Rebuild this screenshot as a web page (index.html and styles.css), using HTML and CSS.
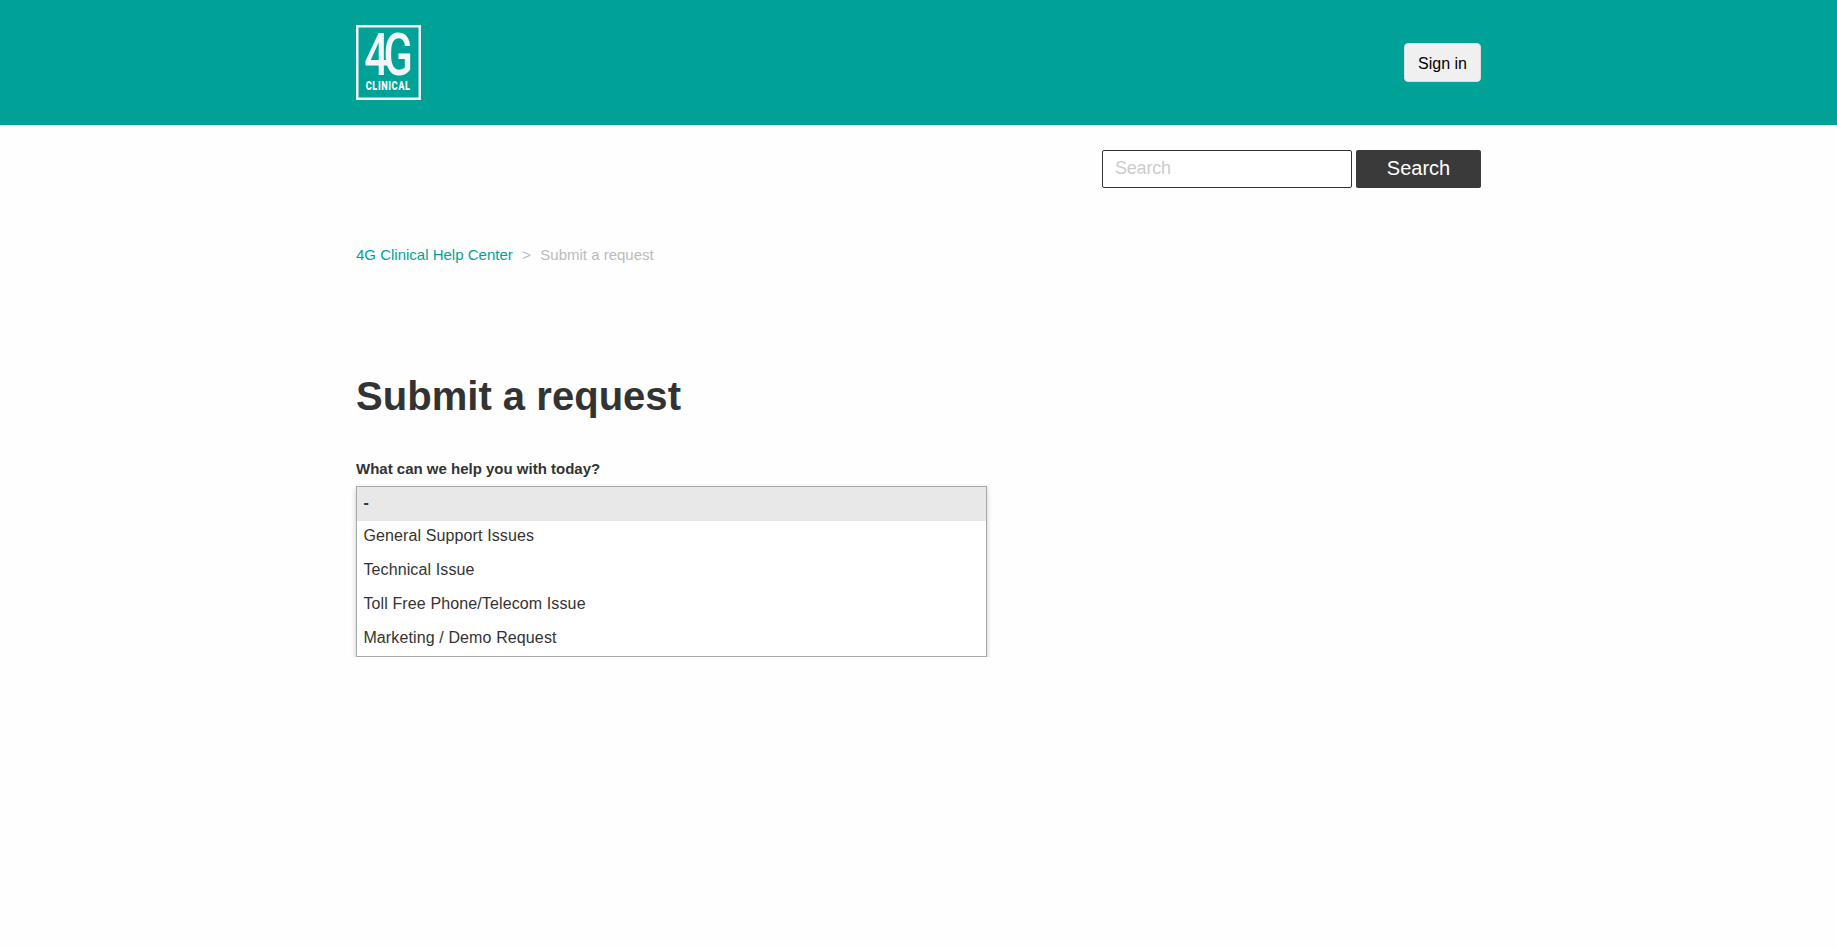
FILE: index.html
```html
<!DOCTYPE html>
<html lang="en">
<head>
<meta charset="utf-8">
<title>Submit a request – 4G Clinical Help Center</title>
<link rel="stylesheet" href="styles.css">
</head>
<body>
<header class="header">
  <div class="wrap header-inner">
    <a class="logo" aria-label="4G Clinical">
      <svg width="65" height="75" viewBox="0 0 65 75">
        <rect class="logo-frame" x="1.25" y="1.25" width="62.5" height="72.5"/>
        <text class="logo-mark" transform="translate(8.2 50.2) scale(.73 1)">4G</text>
        <text class="logo-word" transform="translate(9.7 64.5) scale(.74 1)" textLength="60" lengthAdjust="spacing">CLINICAL</text>
      </svg>
    </a>
    <button class="sign-in">Sign in</button>
  </div>
</header>
<main class="wrap">
  <form class="search">
    <input class="search-input" type="text" placeholder="Search">
    <button class="search-button" type="button">Search</button>
  </form>
  <nav class="crumbs">
    <a class="crumb-link">4G Clinical Help Center</a>
    <span class="crumb-sep">&gt;</span>
    <span>Submit a request</span>
  </nav>
  <h1 class="title">Submit a request</h1>
  <div class="label">What can we help you with today?</div>
  <ul class="options">
    <li class="option selected">-</li>
    <li class="option">General Support Issues</li>
    <li class="option">Technical Issue</li>
    <li class="option">Toll Free Phone/Telecom Issue</li>
    <li class="option">Marketing / Demo Request</li>
  </ul>
</main>
</body>
</html>
```

FILE: styles.css
```css
* { box-sizing: border-box; }
body {
  margin: 0;
  background: #fefefe;
  color: #333;
  font-family: "Liberation Sans", Arial, sans-serif;
}
.wrap { width: 1125px; margin: 0 auto; }
.header { height: 125px; background: #00a298; }
.header-inner {
  height: 125px;
  display: flex;
  align-items: center;
  justify-content: space-between;
}
.logo, .logo svg { display: block; }
.logo-frame { fill: none; stroke: #f2f6f6; stroke-width: 2.5; }
.logo-mark { fill: #f2f6f6; font: 500 59px Roboto, sans-serif; letter-spacing: -7px; }
.logo-word { fill: #f2f6f6; font: 900 12.5px Roboto, sans-serif; }
.sign-in {
  width: 77px;
  height: 39px;
  padding: 2px 0 0;
  border: 1px solid #ddd;
  border-radius: 4px;
  background: #f0f0f0;
  color: #000;
  font: 16px "Liberation Sans", Arial, sans-serif;
}
.search {
  display: flex;
  justify-content: flex-end;
  gap: 4px;
  padding-top: 25px;
}
.search-input {
  width: 250px;
  height: 38px;
  padding: 0 12px 1px;
  border: 1px solid #333;
  border-radius: 2px;
  background: #fff;
  font: 18px "Liberation Sans", Arial, sans-serif;
  letter-spacing: -.2px;
}
.search-input::placeholder { color: #ccc; opacity: 1; }
.search-button {
  width: 125px;
  height: 38px;
  padding: 0 0 2px;
  border: 0;
  border-radius: 2px;
  background: #3a3a3a;
  color: #fff;
  font: 20px "Liberation Sans", Arial, sans-serif;
}
.crumbs {
  display: flex;
  margin-top: 56px;
  color: #bbb;
  font-size: 15px;
  line-height: 22px;
}
.crumb-link { color: #00a298; }
.crumb-sep { margin: 0 9.4px; }
.title {
  margin: 107px 0 0;
  font-size: 40px;
  line-height: 46px;
  letter-spacing: .03px;
}
.label {
  margin-top: 40px;
  font-size: 15px;
  font-weight: 700;
  line-height: 20px;
}
.options {
  width: 631px;
  height: 171px;
  margin: 7px 0 0;
  padding: 0;
  border: 1px solid #a9a9a9;
  background: #fff;
  box-shadow: 0 2px 5px rgba(0, 0, 0, .22);
  list-style: none;
}
.option {
  height: 34px;
  padding-left: 6.4px;
  font-size: 16px;
  letter-spacing: .12px;
  line-height: 29px;
}
.selected { background: #e8e8e8; font-weight: 700; line-height: 32px; }
```
